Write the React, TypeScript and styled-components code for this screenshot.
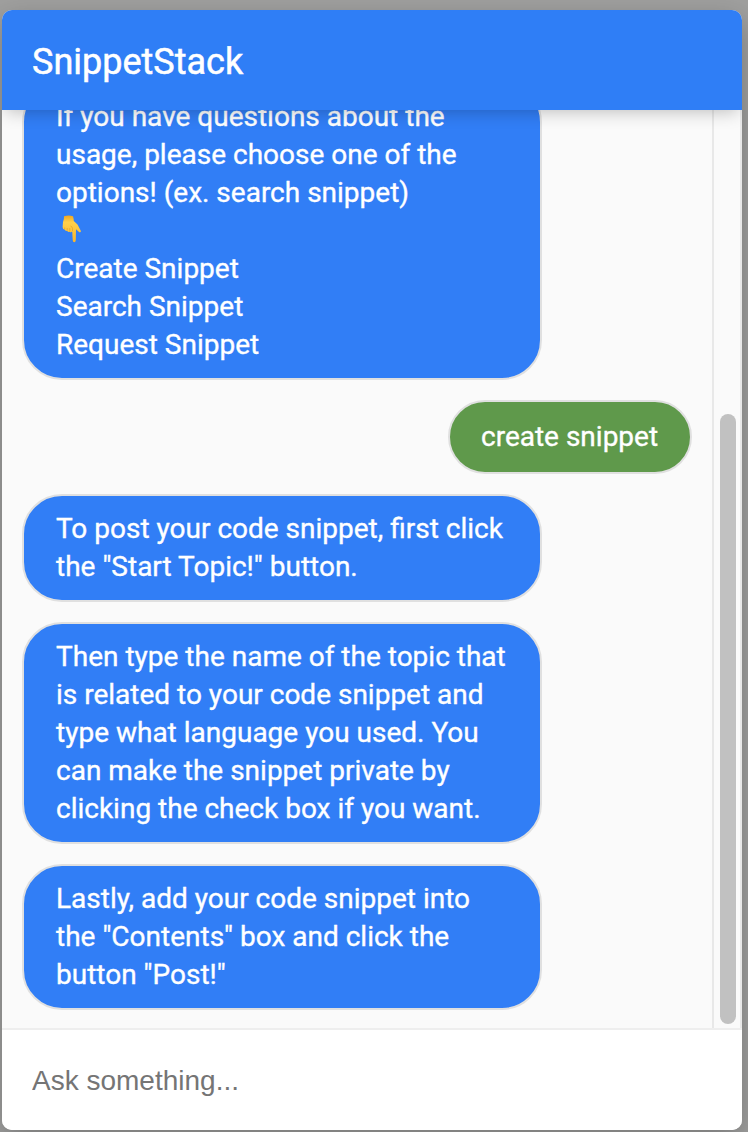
import React from 'react';
import styled, { createGlobalStyle } from 'styled-components';

const GlobalStyle = createGlobalStyle`
  * { box-sizing: border-box; }
  body {
    margin: 0;
    background: #a0a09f;
    font-family: Roboto, 'Liberation Sans', sans-serif;
    overflow: hidden;
  }
`;

const Page = styled.main`
  height: 1132px;
  padding: 10px 6px 2px 2px;
  overflow: hidden;
`;

const Widget = styled.section`
  display: flex;
  flex-direction: column;
  height: 100%;
  border-radius: 10px;
  overflow: hidden;
  background: #fafafa;
  box-shadow: 0 10px 30px rgba(0, 0, 0, 0.25);
`;

const Header = styled.header`
  display: flex;
  align-items: center;
  flex: 0 0 100px;
  padding: 4px 30px 0;
  background: #2f7ef6;
  color: #fff;
  font-size: 36px;
  font-weight: 400;
  -webkit-text-stroke: 0.5px #fff;
  z-index: 1;
  box-shadow: 0 6px 16px -4px rgba(0, 0, 0, 0.24);
`;

const Body = styled.div`
  display: flex;
  flex: 1;
  min-height: 0;
`;

const Messages = styled.div`
  display: flex;
  flex: 1;
  flex-direction: column;
  justify-content: flex-end;
  gap: 20px;
  overflow: hidden;
  padding: 0 20px 18px;
`;

const Bubble = styled.div<{ $mine?: boolean }>`
  flex: none;
  align-self: ${(p) => (p.$mine ? 'flex-end' : 'flex-start')};
  width: ${(p) => (p.$mine ? '244px' : '520px')};
  padding: ${(p) => (p.$mine ? '16px 0 16px 31px' : '14px 0 14px 32px')};
  border: 2px solid #e0e0e0;
  border-radius: 40px;
  background: ${(p) => (p.$mine ? '#5f994b' : '#317ef6')};
  color: #fff;
  font-size: 28px;
  line-height: 38px;
  -webkit-text-stroke: 0.35px #fff;
`;

const Line = styled.div`
  height: 38px;
  white-space: nowrap;
`;

const Pointer = styled.svg`
  display: block;
  width: 32px;
  height: 33px;
  padding-top: 1px;
`;

const Track = styled.div`
  display: flex;
  align-items: flex-end;
  width: 30px;
  padding: 0 4px 4px 6px;
  border: 2px solid #e8e8e8;
  border-width: 0 2px;
`;

const Thumb = styled.div`
  width: 16px;
  height: 610px;
  border-radius: 8px;
  background: #c1c1c1;
`;

const Footer = styled.footer`
  flex: 0 0 102px;
  border-top: 2px solid #eee;
  background: #fff;
`;

const Input = styled.input`
  width: 100%;
  height: 100px;
  padding: 2px 30px 0;
  border: 0;
  outline: 0;
  background: transparent;
  font: 28px 'Liberation Sans', Arial, sans-serif;
  &::placeholder { color: #757575; opacity: 1; }
`;

const PointDown = () => (
  <Pointer viewBox="0 0 32 32" role="img" aria-label="Pointing down">
    <defs>
      <linearGradient id="skin" x1="0" y1="0" x2="0" y2="1">
        <stop offset="0" stopColor="#f0a51f" />
        <stop offset="0.25" stopColor="#ffd04b" />
        <stop offset="1" stopColor="#f9b52c" />
      </linearGradient>
    </defs>
    <path
      d="M8 3.2Q13 1.8 17 3.2Q17.8 6 17.8 8L21.5 11.5L24.9 18Q25 19.6 23.3 19.2L20 16.2L19.8 27Q19.6 29.3 18.3 29.3Q16.8 29.3 16.7 27L16.2 18.5Q14.8 20 13.5 18.8Q11.8 19.3 11 17.8Q9.3 18.2 8.6 16.5Q6.8 16.5 6.6 14L7 9Q8.2 6.8 8 3.2Z"
      fill="url(#skin)"
    />
    <path
      d="M8.7 14.5V16.2M11.2 15V17.6M13.8 15V18.4M14.5 13Q16.4 13.5 16.5 15.5V18"
      fill="none"
      stroke="#dc961f"
      strokeWidth="0.55"
    />
  </Pointer>
);

const bot: string[][] = [
  ['To post your code snippet, first click', 'the "Start Topic!" button.'],
  [
    'Then type the name of the topic that',
    'is related to your code snippet and',
    'type what language you used. You',
    'can make the snippet private by',
    'clicking the check box if you want.',
  ],
  ['Lastly, add your code snippet into', 'the "Contents" box and click the', 'button "Post!"'],
];

export default function App() {
  return (
    <>
      <GlobalStyle />
      <Page>
        <Widget>
          <Header>SnippetStack</Header>
          <Body>
            <Messages>
              <Bubble>
                <Line>If you have questions about the</Line>
                <Line>usage, please choose one of the</Line>
                <Line>options! (ex. search snippet)</Line>
                <Line><PointDown /></Line>
                <Line>Create Snippet</Line>
                <Line>Search Snippet</Line>
                <Line>Request Snippet</Line>
              </Bubble>
              <Bubble $mine>
                <Line>create snippet</Line>
              </Bubble>
              {bot.map((lines) => (
                <Bubble key={lines[0]}>
                  {lines.map((line) => <Line key={line}>{line}</Line>)}
                </Bubble>
              ))}
            </Messages>
            <Track><Thumb /></Track>
          </Body>
          <Footer>
            <Input placeholder="Ask something..." />
          </Footer>
        </Widget>
      </Page>
    </>
  );
}
